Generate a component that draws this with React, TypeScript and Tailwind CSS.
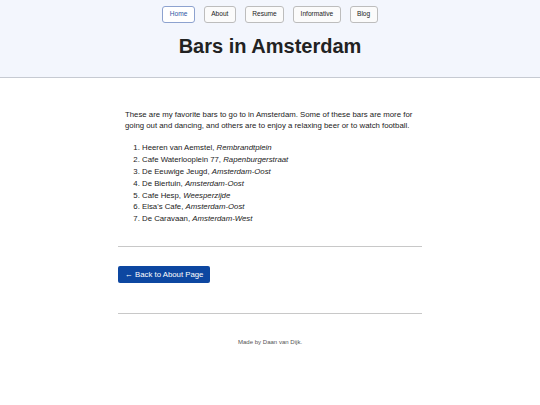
import React from "react";

const navItems = ["Home", "About", "Resume", "Informative", "Blog"];

const bars: [string, string][] = [
  ["Heeren van Aemstel", "Rembrandtplein"],
  ["Cafe Waterlooplein 77", "Rapenburgerstraat"],
  ["De Eeuwige Jeugd", "Amsterdam-Oost"],
  ["De Biertuin", "Amsterdam-Oost"],
  ["Cafe Hesp", "Weesperzijde"],
  ["Elsa's Cafe", "Amsterdam-Oost"],
  ["De Caravaan", "Amsterdam-West"],
];

export default function App() {
  return (
    <div className="min-h-[405px] w-[540px] bg-white font-['Liberation_Sans',Arial,sans-serif] text-[#222]">
      <header className="h-[78px] border-b border-[#c6cad2] bg-[#f3f6fd]">
        <nav className="flex justify-center gap-[8.8px] pt-[6px]">
          {navItems.map((n, i) => (
            <a
              key={n}
              className={
                i === 0
                  ? "flex h-[17px] items-center rounded-[3px] border border-[#8da2cf] bg-white px-[6.5px] text-[6.6px] leading-none text-[#2f55a4]"
                  : "flex h-[17px] items-center rounded-[3px] border border-[#bdbdbd] bg-[#fbfbfb] px-[6.5px] text-[6.6px] leading-none text-[#222]"
              }
            >
              {n}
            </a>
          ))}
        </nav>
        <h1 className="mt-[13px] text-center text-[20px] font-bold leading-[20px] text-[#222]">
          Bars in Amsterdam
        </h1>
      </header>
      <main className="mx-auto w-[304px] pt-[30.5px]">
        <div className="px-[7px] text-[7.8px]">
          <p className="mb-[10.7px] leading-[11.6px]">
            These are my favorite bars to go to in Amsterdam. Some of these bars are more for going out and
            dancing, and others are to enjoy a relaxing beer or to watch football.
          </p>
          <ol className="list-decimal pl-[17px] leading-[11.8px]">
            {bars.map(([name, place]) => (
              <li key={name}>
                {name}, <em>{place}</em>
              </li>
            ))}
          </ol>
        </div>
        <hr className="mt-[21px] border-t border-[#c8c8c8]" />
        <div className="flex pt-[19.5px] pb-[30px]">
          <a className="flex h-[17px] items-center rounded-[2px] bg-[#0d47a1] px-[7px] text-[7.8px] leading-none text-white">
            ← Back to About Page
          </a>
        </div>
        <hr className="border-t border-[#c8c8c8]" />
        <footer className="pt-[23.5px] text-center text-[6.05px] leading-[8px] text-[#555]">
          Made by Daan van Dijk.
        </footer>
      </main>
    </div>
  );
}
